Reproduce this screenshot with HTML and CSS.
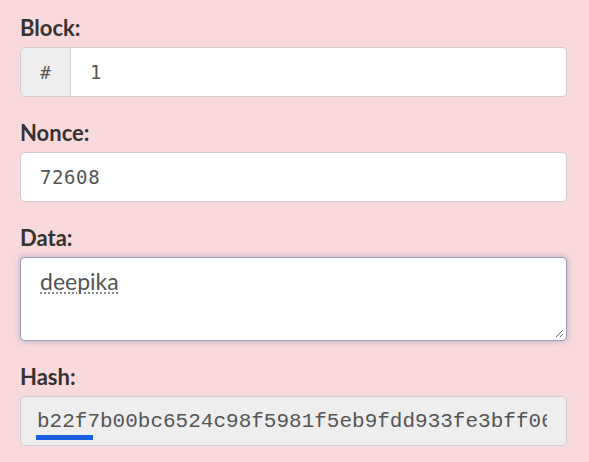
FILE: index.html
```html
<!DOCTYPE html>
<html>
<head>
<meta charset="utf-8">
<link rel="stylesheet" href="styles.css">
</head>
<body>
<form class="block-form">
  <div class="group">
    <label class="lbl">Block:</label>
    <div class="input-group">
      <span class="addon">#</span>
      <div class="field mono">1</div>
    </div>
  </div>
  <div class="group">
    <label class="lbl">Nonce:</label>
    <div class="field mono solo">72608</div>
  </div>
  <div class="group">
    <label class="lbl">Data:</label>
    <div class="textarea"><span class="spell">deepika</span>
      <svg class="grip" width="10" height="10" viewBox="0 0 10 10"><path d="M9 2 L2 9 M9 6 L6 9" stroke="#6b6b6b" stroke-width="1" fill="none"/></svg>
    </div>
  </div>
  <div class="group">
    <label class="lbl">Hash:</label>
    <div class="field hash solo"><span class="hash-text">b22f7b00bc6524c98f5981f5eb9fdd933fe3bff0604b1a63c2d6e0f</span><span class="sel"></span></div>
  </div>
</form>
</body>
</html>
```
FILE: styles.css
```css
html, body {
  margin: 0;
  padding: 0;
  background: #fad9dc;
}
body {
  padding: 14px 22px 0 20px;
  font-family: Lato, "Open Sans", sans-serif;
  color: #333;
}
.block-form {
  width: 547px;
  display: flex;
  flex-direction: column;
  gap: 22px;
}
.group {
  display: flex;
  flex-direction: column;
}
.lbl {
  font-weight: 700;
  font-size: 22px;
  line-height: 28px;
  margin-bottom: 5px;
  color: #333;
}
.input-group {
  display: flex;
  height: 50px;
  border: 1px solid #d3cdd3;
  border-radius: 5px;
  overflow: hidden;
  box-sizing: border-box;
}
.addon {
  width: 50px;
  flex: none;
  display: flex;
  align-items: center;
  justify-content: center;
  background: #eeeeee;
  border-right: 1px solid #d3cdd3;
  font-family: "DejaVu Sans Mono", monospace;
  font-size: 18px;
  color: #555;
  box-sizing: border-box;
}
.field {
  flex: 1;
  display: flex;
  align-items: center;
  height: 48px;
  background: #fff;
  padding-left: 19px;
  color: #555;
  white-space: nowrap;
  overflow: hidden;
}
.mono {
  font-family: "DejaVu Sans Mono", monospace;
  font-size: 19px;
  letter-spacing: 0.6px;
}
.solo {
  flex: none;
  height: 50px;
  box-sizing: border-box;
  border: 1px solid #d3cdd3;
  border-radius: 5px;
}
.textarea {
  position: relative;
  height: 84px;
  box-sizing: border-box;
  background: #fff;
  border: 1px solid #9c9db2;
  border-radius: 5px;
  box-shadow: 0 0 4px 2px rgba(175, 170, 200, 0.55);
  padding: 8px 19px;
  font-size: 23px;
  line-height: 30px;
  color: #555;
}
.spell {
  text-decoration: underline dotted #8a8a8a;
  text-decoration-thickness: 2px;
  text-underline-offset: 2px;
}
.grip {
  position: absolute;
  right: 2px;
  bottom: 2px;
}
.hash {
  position: relative;
  background: #eeeeee;
  font-family: "Courier New", "Liberation Mono", monospace;
  font-size: 21px;
  padding: 0 19px 0 16px;
  color: #555;
}
.hash-text {
  flex: 1;
  overflow: hidden;
  white-space: nowrap;
}
.sel {
  position: absolute;
  left: 15px;
  top: 38px;
  width: 57px;
  height: 5px;
  background: #1a5fe0;
}
```
